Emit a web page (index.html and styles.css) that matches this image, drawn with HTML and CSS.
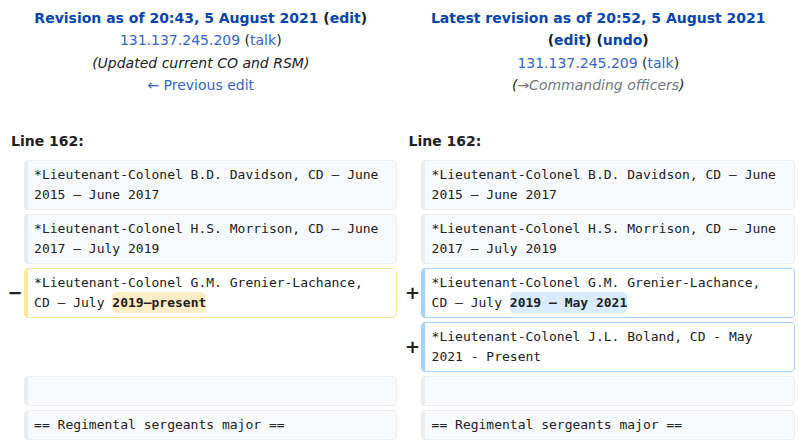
FILE: index.html
```html
<!DOCTYPE html>
<html lang="en">
<head>
<meta charset="utf-8">
<title>Diff</title>
<link rel="stylesheet" href="styles.css">
</head>
<body>
<div class="diff">
  <div class="otitle">
    <div><strong><a href="#" class="title">Revision as of 20:43, 5 August 2021</a> (<a href="#" class="title">edit</a>)</strong></div>
    <div><a href="#">131.137.245.209</a> (<a href="#">talk</a>)</div>
    <div class="comment">(Updated current CO and RSM)</div>
    <div><a href="#">← Previous edit</a></div>
  </div>
  <div class="ntitle">
    <div><strong><a href="#" class="title">Latest revision as of 20:52, 5 August 2021</a></strong></div>
    <div><strong>(<a href="#" class="title">edit</a>) (<a href="#" class="title">undo</a>)</strong></div>
    <div><a href="#">131.137.245.209</a> (<a href="#">talk</a>)</div>
    <div class="comment">(<span class="auto"><a href="#" class="arrow">→</a>Commanding officers</span>)</div>
  </div>

  <div class="lineno">Line 162:</div>
  <div class="lineno">Line 162:</div>

  <div class="marker"></div>
  <div class="cell context"><div class="txt">*Lieutenant-Colonel B.D. Davidson, CD – June 2015 – June 2017</div></div>
  <div class="marker"></div>
  <div class="cell context"><div class="txt">*Lieutenant-Colonel B.D. Davidson, CD – June 2015 – June 2017</div></div>

  <div class="marker"></div>
  <div class="cell context"><div class="txt">*Lieutenant-Colonel H.S. Morrison, CD – June 2017 – July 2019</div></div>
  <div class="marker"></div>
  <div class="cell context"><div class="txt">*Lieutenant-Colonel H.S. Morrison, CD – June 2017 – July 2019</div></div>

  <div class="marker">−</div>
  <div class="cell deleted"><div class="txt">*Lieutenant-Colonel G.M. Grenier-Lachance, CD – July <del class="change">2019–present</del></div></div>
  <div class="marker">+</div>
  <div class="cell added"><div class="txt">*Lieutenant-Colonel G.M. Grenier-Lachance, CD – July <ins class="change">2019 – May 2021</ins></div></div>

  <div class="marker"></div>
  <div class="blank"></div>
  <div class="marker">+</div>
  <div class="cell added"><div class="txt">*Lieutenant-Colonel J.L. Boland, CD - May 2021 - Present</div></div>

  <div class="marker"></div>
  <div class="cell context"><div class="txt empty"></div></div>
  <div class="marker"></div>
  <div class="cell context"><div class="txt empty"></div></div>

  <div class="marker"></div>
  <div class="cell context"><div class="txt">== Regimental sergeants major ==</div></div>
  <div class="marker"></div>
  <div class="cell context"><div class="txt">== Regimental sergeants major ==</div></div>
</div>
</body>
</html>
```

FILE: styles.css
```css
html, body {
  margin: 0;
  padding: 0;
  background: #ffffff;
}

body {
  font-family: "DejaVu Sans", sans-serif;
  font-size: 14px;
  color: #202122;
}

a {
  color: #3366cc;
  text-decoration: none;
}

a.title {
  color: #0645ad;
}

.diff {
  display: grid;
  grid-template-columns: 2fr 48fr 2fr 48fr;
  column-gap: 4px;
  row-gap: 4px;
  padding: 4px;
}

.otitle {
  grid-column: 1 / span 2;
}

.ntitle {
  grid-column: 3 / span 2;
}

.otitle, .ntitle {
  text-align: center;
  line-height: 22.4px;
  padding-top: 3px;
}

.comment {
  font-style: italic;
}

.auto {
  color: #72777d;
}

.auto .arrow {
  color: #72777d;
}

.lineno {
  grid-column: span 2;
  font-weight: bold;
  line-height: 22.4px;
  padding: 0 7px 4px;
  margin-top: 29px;
}

.marker {
  align-self: center;
  text-align: right;
  font-weight: bold;
  font-size: 18px;
  line-height: 20px;
  margin-right: -3px;
  color: #202122;
}

.cell {
  border-style: solid;
  border-width: 1px 1px 1px 4px;
  border-radius: 4.3px;
  padding: 4px 13px 4px 6.5px;
  font-family: "DejaVu Sans Mono", monospace;
  font-size: 13px;
  line-height: 20px;
  min-width: 0;
}

.txt {
  white-space: pre-wrap;
  overflow-wrap: break-word;
}

.txt.empty {
  min-height: 20px;
}

.context {
  background: #f8f9fa;
  border-color: #eaecf0;
  color: #202122;
}

.deleted {
  background: #ffffff;
  border-color: #ffe49c;
}

.added {
  background: #ffffff;
  border-color: #a3d3ff;
}

.change {
  font-weight: bold;
  text-decoration: none;
  border-radius: 4.3px;
  padding: 3px 0;
}

.deleted .change {
  background: #feeec8;
}

.added .change {
  background: #d8ecff;
}
```
